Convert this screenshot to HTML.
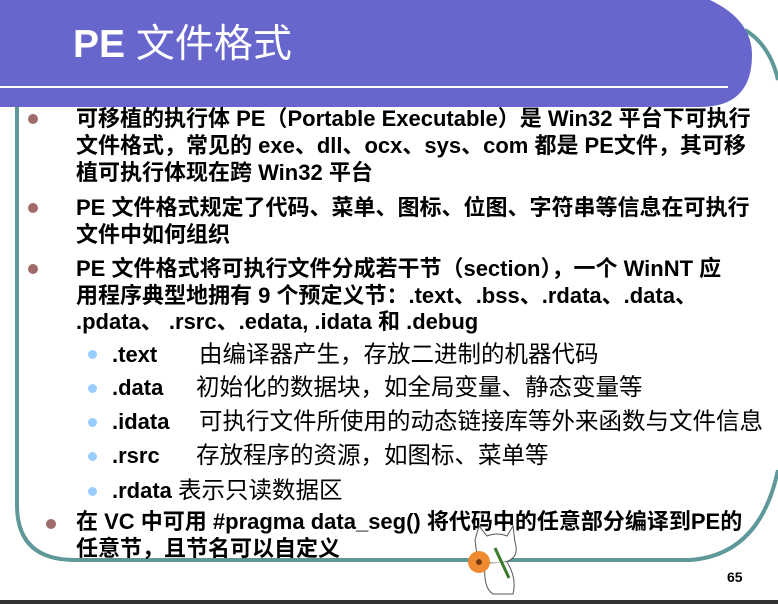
<!DOCTYPE html>
<html><head><meta charset="utf-8"><style>
body{margin:0;width:778px;height:604px;overflow:hidden;background:#fff;position:relative;font-family:"Liberation Sans","Noto Sans CJK SC",sans-serif}
.t{position:absolute;font-size:22px;color:#000;white-space:nowrap;line-height:27px}
.s{font-size:23.5px}
.b{font-weight:bold}
.dot{position:absolute;width:10px;height:10px;border-radius:50%;background:#9e6a6a}
.sd{position:absolute;width:9px;height:9px;border-radius:50%;background:#99ccff}
</style></head><body>
<svg width="778" height="604" style="position:absolute;left:0;top:0">
<path d="M17 100 L17 505 Q17 560 75 560 L690 560 Q760 555 778 470" fill="none" stroke="#5f9898" stroke-width="4"/>
<path d="M745 30 Q770 45 778 80" fill="none" stroke="#5f9898" stroke-width="4"/>
<path d="M0 0 L710 0 Q752 20 752 55 Q752 107 700 107 L0 107 Z" fill="#6666cc"/>
<rect x="0" y="86" width="728" height="2" fill="#fff"/>
<rect x="0" y="600" width="778" height="4" fill="#333"/>
</svg>
<div class="t" style="left:73px;top:22px;font-size:39px;color:#fff;line-height:46px"><b>PE</b> 文件格式</div>
<div class="dot" style="left:28px;top:114px"></div>
<div class="t b" style="left:76px;top:105px">可移植的执行体 PE（Portable Executable）是 Win32 平台下可执行</div>
<div class="t b" style="left:76px;top:132px">文件格式，常见的 exe、dll、ocx、sys、com 都是 PE文件，其可移</div>
<div class="t b" style="left:76px;top:159px">植可执行体现在跨 Win32 平台</div>
<div class="dot" style="left:28px;top:203px"></div>
<div class="t b" style="left:76px;top:194px">PE 文件格式规定了代码、菜单、图标、位图、字符串等信息在可执行</div>
<div class="t b" style="left:76px;top:221px">文件中如何组织</div>
<div class="dot" style="left:28px;top:264px"></div>
<div class="t b" style="left:76px;top:255px">PE 文件格式将可执行文件分成若干节（section），一个 WinNT 应</div>
<div class="t b" style="left:76px;top:282px">用程序典型地拥有 9 个预定义节：.text、.bss、.rdata、.data、</div>
<div class="t b" style="left:76px;top:308px">.pdata、 .rsrc、.edata, .idata 和 .debug</div>
<div class="sd" style="left:88px;top:350px"></div><div class="t b" style="left:112px;top:341px">.text</div><div class="t s" style="left:199px;top:341px">由编译器产生，存放二进制的机器代码</div>
<div class="sd" style="left:88px;top:384px"></div><div class="t b" style="left:112px;top:374px">.data</div><div class="t s" style="left:196px;top:374px">初始化的数据块，如全局变量、静态变量等</div>
<div class="sd" style="left:88px;top:418px"></div><div class="t b" style="left:112px;top:408px">.idata</div><div class="t s" style="left:199px;top:408px">可执行文件所使用的动态链接库等外来函数与文件信息</div>
<div class="sd" style="left:88px;top:452px"></div><div class="t b" style="left:112px;top:442px">.rsrc</div><div class="t s" style="left:196px;top:442px">存放程序的资源，如图标、菜单等</div>
<div class="sd" style="left:88px;top:487px"></div><div class="t" style="left:112px;top:477px"><b>.rdata</b> <span class="s">表示只读数据区</span></div>
<div class="dot" style="left:46px;top:519px"></div>
<div class="t b" style="left:76px;top:508px">在 VC 中可用 #pragma data_seg() 将代码中的任意部分编译到PE的</div>
<div class="t b" style="left:76px;top:535px">任意节，且节名可以自定义</div>
<div class="t b" style="left:727px;top:564px;font-size:14px">65</div>
<svg width="80" height="80" style="position:absolute;left:455px;top:518px">
<path d="M20 22 L24 8 L32 18 Q42 14 52 18 L58 8 L60 24 Q65 40 50 44 Q30 48 22 38 Z" fill="#fff" stroke="#555"/>
<path d="M30 46 Q28 70 38 76 L58 76 Q62 60 52 44" fill="#fff" stroke="#555"/>
<circle cx="24" cy="44" r="11" fill="#f08a30"/><circle cx="24" cy="44" r="3" fill="#7a3a10"/>
<path d="M40 30 L54 60" stroke="#3a7a2a" stroke-width="3"/>
</svg>
</body></html>
